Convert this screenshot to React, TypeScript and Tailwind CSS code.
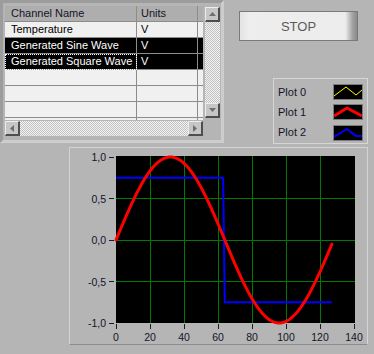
import React from "react"

type Row = { name: string; unit: string; sel?: boolean; focus?: boolean }

const ROWS: Row[] = [
  { name: "Temperature", unit: "V" },
  { name: "Generated Sine Wave", unit: "V", sel: true },
  { name: "Generated Square Wave", unit: "V", sel: true, focus: true },
  { name: "", unit: "" },
  { name: "", unit: "" },
  { name: "", unit: "" },
  { name: "", unit: "" },
]

const checker =
  "bg-[repeating-conic-gradient(#f2f2f2_0_25%,#c2c2c2_0_50%)] bg-size-[2px_2px]"

function Arrow({ dir }: { dir: "up" | "down" | "left" | "right" }) {
  const pts = {
    up: "0,4 7,4 3.5,0",
    down: "0,0 7,0 3.5,4",
    left: "4,0 4,7 0,3.5",
    right: "0,0 0,7 4,3.5",
  }[dir]
  const vertical = dir === "up" || dir === "down"
  return (
    <svg width={vertical ? 7 : 4} height={vertical ? 4 : 7}>
      <polygon points={pts} fill="#6e6e6e" />
    </svg>
  )
}

function ScrollButton({ dir }: { dir: "up" | "down" | "left" | "right" }) {
  return (
    <div className="flex h-[15px] w-[15px] shrink-0 items-center justify-center border-t border-l border-r-2 border-b-2 border-t-[#ececec] border-l-[#ececec] border-r-[#4e4e4e] border-b-[#4e4e4e] bg-[#c6c6c6]">
      <Arrow dir={dir} />
    </div>
  )
}

function ChannelTable() {
  return (
    <div className="box-border h-[143px] w-[224px] border-[3px] border-t-[#9c9c9c] border-l-[#9c9c9c] border-r-[#cdcdcd] border-b-[#cdcdcd] bg-[#b5b5b5] pt-[3px] pl-[2px]">
      <div className="flex">
        <div className="h-[114px] w-[198px] overflow-hidden bg-[#f0f0f0]">
          <div className="flex h-[16px] bg-[#aeaeae] text-[#141428]">
            <div className="flex w-[132px] items-center border-r border-b border-[#8c8c8c] pl-[6px]">Channel Name</div>
            <div className="flex w-[61px] items-center border-r border-b border-[#8c8c8c] pl-[4px]">Units</div>
            <div className="w-[5px] border-b border-[#8c8c8c]" />
          </div>
          {ROWS.map((r, i) => (
            <div key={i} className={`flex h-[16px] ${r.sel ? "bg-black text-white" : "text-black"}`}>
              <div
                className={`flex w-[132px] items-center border-r border-b border-[#8c8c8c] pl-[6px] ${
                  r.focus ? "outline outline-1 outline-dotted outline-white -outline-offset-1" : ""
                }`}
              >
                {r.name}
              </div>
              <div className="flex w-[61px] items-center border-r border-b border-[#8c8c8c] pl-[4px]">{r.unit}</div>
              <div className="w-[5px] border-b border-[#8c8c8c]" />
            </div>
          ))}
        </div>
        <div className={`mt-[1px] ml-[2px] flex h-[111px] w-[15px] flex-col justify-between ${checker}`}>
          <ScrollButton dir="up" />
          <ScrollButton dir="down" />
        </div>
      </div>
      <div className={`mt-[1px] flex h-[15px] w-[198px] justify-between ${checker}`}>
        <ScrollButton dir="left" />
        <ScrollButton dir="right" />
      </div>
    </div>
  )
}

function Swatch({ color, points, width }: { color: string; points: string; width: number }) {
  return (
    <div className="h-[16px] w-[30px] border border-[#7c7c7c] bg-black">
      <svg width={28} height={14} className="block">
        <polyline points={points} fill="none" stroke={color} strokeWidth={width} strokeLinejoin="round" />
      </svg>
    </div>
  )
}

function Legend() {
  const items = [
    { label: "Plot 0", color: "#ffff00", w: 1, pts: "0,11 12,2 22,10 28,5" },
    { label: "Plot 1", color: "#ff0000", w: 3, pts: "0,11 13,3 28,11" },
    { label: "Plot 2", color: "#0000ff", w: 2, pts: "0,11 13,3 22,10 28,10" },
  ]
  return (
    <div className="box-border flex h-[66px] w-[95px] flex-col border border-[#d6d6d6] pt-[3px] pr-[4px] pl-[4px]">
      {items.map((it) => (
        <div key={it.label} className="flex h-[21px] items-center justify-between text-[#141428]">
          <span>{it.label}</span>
          <Swatch color={it.color} points={it.pts} width={it.w} />
        </div>
      ))}
    </div>
  )
}

function Chart() {
  const X = (v: number) => 46 + v * 1.7
  const Y = (v: number) => 92 - v * 83
  const sine = Array.from({ length: 128 }, (_, i) => `${X(i).toFixed(2)},${Y(Math.sin((2 * Math.PI * i) / 128)).toFixed(2)}`).join(" ")
  const square = `${X(0)},${Y(0.75)} ${X(63)},${Y(0.75)} ${X(64)},${Y(-0.75)} ${X(127)},${Y(-0.75)}`
  const xs = [0, 20, 40, 60, 80, 100, 120, 140]
  const ys = [1, 0.5, 0, -0.5, -1]
  return (
    <svg width={297} height={196} className="block" fontFamily="'Liberation Sans', Arial, sans-serif" fontSize={10.5}>
      <rect x={46} y={8} width={239} height={167} fill="#000" />
      <g stroke="#007a00" strokeWidth={1} shapeRendering="crispEdges">
        {xs.slice(1, -1).map((v) => (
          <line key={v} x1={X(v)} x2={X(v)} y1={8} y2={175} />
        ))}
        {[0.5, 0, -0.5].map((v) => (
          <line key={v} x1={46} x2={285} y1={Y(v)} y2={Y(v)} />
        ))}
      </g>
      <polyline points={square} fill="none" stroke="#0000ff" strokeWidth={2} />
      <polyline points={sine} fill="none" stroke="#ff0000" strokeWidth={3} strokeLinejoin="round" strokeLinecap="round" />
      <g stroke="#1a1a2a" strokeWidth={1} shapeRendering="crispEdges">
        {ys.map((v) => (
          <line key={v} x1={39} x2={44} y1={Y(v)} y2={Y(v)} />
        ))}
        {xs.map((v) => (
          <line key={v} x1={X(v)} x2={X(v)} y1={176} y2={181} />
        ))}
      </g>
      <g fill="#141428">
        {ys.map((v) => (
          <text key={v} x={36} y={Y(v) + 4} textAnchor="end">
            {v.toFixed(1).replace(".", ",")}
          </text>
        ))}
        {xs.map((v) => (
          <text key={v} x={X(v)} y={193} textAnchor="middle">
            {v}
          </text>
        ))}
      </g>
    </svg>
  )
}

export default function App() {
  return (
    <div className="h-[354px] w-[374px] overflow-hidden bg-[#b5b5b5] font-['Liberation_Sans',Arial,sans-serif] text-[11px] leading-none">
      <div className="flex h-[145px]">
        <ChannelTable />
        <div className="flex flex-col pt-[11px] pl-[15px]">
          <button
            type="button"
            className="box-border h-[30px] w-[119px] border border-[#7a7a7a] bg-[linear-gradient(90deg,#e4e4e4_0%,#eeeeee_8%,#ececec_90%,#a4a4a4_96%,#8a8a8a_100%)] text-[13px] text-[#5a5a5a]"
          >
            STOP
          </button>
          <div className="mt-[37px] ml-[34px]">
            <Legend />
          </div>
        </div>
      </div>
      <div className="mt-[2px] ml-[69px] box-border h-[198px] w-[299px] border border-t-[#d4d4d4] border-l-[#d4d4d4] border-r-[#d4d4d4] border-b-[#8c8c8c]">
        <Chart />
      </div>
    </div>
  )
}
